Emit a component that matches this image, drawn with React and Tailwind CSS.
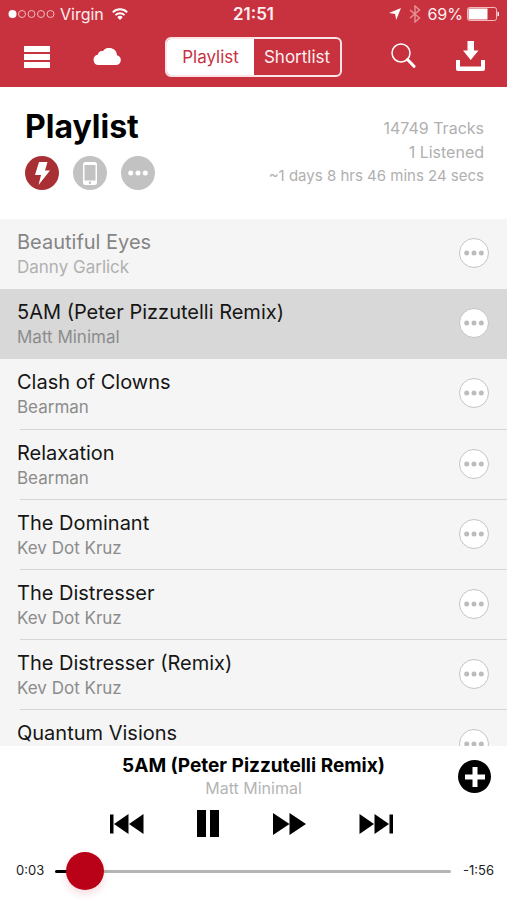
import { useState } from "react";

const tracks = [
  { title: "Beautiful Eyes", artist: "Danny Garlick", state: "played" },
  { title: "5AM (Peter Pizzutelli Remix)", artist: "Matt Minimal", state: "current" },
  { title: "Clash of Clowns", artist: "Bearman" },
  { title: "Relaxation", artist: "Bearman" },
  { title: "The Dominant", artist: "Kev Dot Kruz" },
  { title: "The Distresser", artist: "Kev Dot Kruz" },
  { title: "The Distresser (Remix)", artist: "Kev Dot Kruz" },
  { title: "Quantum Visions" },
];

function Signal() {
  return (
    <svg className="h-3 w-12" viewBox="0 0 48 12" aria-hidden="true">
      <circle cx="4.5" cy="6" r="4" fill="#fff" />
      {[14, 23.5, 33, 42.5].map((x) => (
        <circle key={x} cx={x} cy="6" r="3.5" fill="none" stroke="#f3b9bd" strokeWidth="1" />
      ))}
    </svg>
  );
}

function Wifi() {
  return (
    <svg className="h-3 w-4" viewBox="0 0 16 12" fill="none" stroke="#fff" strokeWidth="1.9" aria-hidden="true">
      <path d="M0.8 4.3a10.2 10.2 0 0 1 14.4 0" />
      <path d="M3.4 7.1a6.5 6.5 0 0 1 9.2 0" />
      <path d="M8 12 5.3 9.2a3.8 3.8 0 0 1 5.4 0z" fill="#fff" stroke="none" />
    </svg>
  );
}

function StatusBar() {
  return (
    <div className="grid h-7 grid-cols-3 items-center px-2 text-base leading-7">
      <div className="flex items-center">
        <Signal />
        <span className="mr-2 ml-1">Virgin</span>
        <Wifi />
      </div>
      <span className="text-center text-[17px] font-semibold">21:51</span>
      <div className="flex items-center justify-end">
        <svg className="mr-2 h-3 w-3" viewBox="0 0 12 12" aria-hidden="true">
          <path d="M12 0 7.2 12 6.1 6.1 0 5z" fill="#fff" />
        </svg>
        <svg className="mr-1.5 h-[18px] w-3" viewBox="0 0 12 18" fill="none" stroke="#e79298" strokeWidth="1.4" aria-hidden="true">
          <path d="M1 5l9.500 8L6 17V1l4.500 4L1 13" />
        </svg>
        <span className="mr-1">69%</span>
        <svg className="h-[14px] w-8" viewBox="0 0 32 14" aria-hidden="true">
          <rect x="0.5" y="0.5" width="29" height="13" rx="2" fill="none" stroke="#f3b9bd" />
          <rect x="1.500" y="1.500" width="19" height="11" fill="#fff" />
          <path d="M30.500 4.500a2.600 2.600 0 0 1 0 5z" fill="#fff" />
        </svg>
      </div>
    </div>
  );
}

function Nav({ tab, onTab }) {
  const tabClass = (name) =>
    tab === name ? "bg-white text-[#c8323f]" : "text-[#fdeff0]";
  return (
    <nav className="flex items-center pt-[9px] pr-[22px] pb-[10px] pl-6">
      <div className="flex items-center gap-[43px]">
        <button type="button" aria-label="Menu">
          <svg className="h-[22px] w-[26px]" viewBox="0 0 26 22" fill="#fff">
            <path d="M0 0h26v6H0zM0 8h26v6H0zM0 16h26v6H0z" />
          </svg>
        </button>
        <button type="button" aria-label="Cloud">
          <svg className="h-[18px] w-[29px]" viewBox="0 0 29 18" fill="#fff">
            <path d="M5.500 17a5.200 5.200 0 0 1-.7-10.300A4.600 4.600 0 0 1 10 3 7.800 7.800 0 0 1 24 7.200 5 5 0 0 1 23.500 17z" />
          </svg>
        </button>
        <div className="flex h-10 overflow-hidden rounded-md border-2 border-[#fbe4e6] text-[17px]">
          <button type="button" aria-pressed={tab === "playlist"} onClick={() => onTab("playlist")} className={`w-[87px] pt-0.5 ${tabClass("playlist")}`}>
            Playlist
          </button>
          <button type="button" aria-pressed={tab === "shortlist"} onClick={() => onTab("shortlist")} className={`w-[86px] pt-0.5 ${tabClass("shortlist")}`}>
            Shortlist
          </button>
        </div>
      </div>
      <div className="ml-auto flex items-center gap-10">
        <button type="button" aria-label="Search" className="pb-1">
          <svg className="h-[25px] w-[25px]" viewBox="0 0 25 25" fill="none" stroke="#fff">
            <circle cx="10" cy="10" r="9" strokeWidth="1.500" />
            <path d="M16.500 16.500 23 23.300" strokeWidth="3" strokeLinecap="round" />
          </svg>
        </button>
        <button type="button" aria-label="Download" className="pb-0.5">
          <svg className="h-[30px] w-[29px]" viewBox="0 0 29 30" fill="#fff">
            <path d="M11.500 0h6.500v9.500h4.500L14.700 19 7 9.500h4.500z" />
            <path d="M0 19h4V25.500h21V19h4V28a2 2 0 0 1-2 2H2a2 2 0 0 1-2-2z" />
          </svg>
        </button>
      </div>
    </nav>
  );
}

function Dots() {
  return (
    <svg className="h-[6px] w-5" viewBox="0 0 20 6" fill="currentColor" aria-hidden="true">
      <circle cx="2.700" cy="3" r="2.500" />
      <circle cx="10" cy="3" r="2.500" />
      <circle cx="17.300" cy="3" r="2.500" />
    </svg>
  );
}

function Summary() {
  const round = "flex h-[34px] w-[34px] items-center justify-center rounded-full text-white";
  return (
    <section className="flex justify-between bg-white pt-[22px] pr-[23px] pb-[29px] pl-[25px]">
      <div>
        <h1 className="text-[32px] leading-9 font-bold text-black">Playlist</h1>
        <div className="mt-[11px] flex gap-[14px]">
          <button type="button" aria-label="Quick play" className={`${round} bg-[#a83034]`}>
            <svg className="h-[23px] w-[15px]" viewBox="0 0 15 23" fill="currentColor">
              <path d="M4 0h8.500L10 8.500h5L3.500 23 6 13H0z" />
            </svg>
          </button>
          <button type="button" aria-label="On this device" className={`${round} bg-[#c2c2c2]`}>
            <svg className="h-[23px] w-[14px]" viewBox="0 0 14 23">
              <path fillRule="evenodd" fill="currentColor" d="M2.500 0h9A2.500 2.500 0 0 1 14 2.500v18a2.500 2.500 0 0 1-2.500 2.500h-9A2.500 2.500 0 0 1 0 20.500v-18A2.500 2.500 0 0 1 2.500 0zM1.500 3v15.500h11V3zM7 19.600a1.200 1.200 0 1 0 0 2.400 1.200 1.200 0 0 0 0-2.400z" />
            </svg>
          </button>
          <button type="button" aria-label="More options" className={`${round} bg-[#c2c2c2]`}>
            <Dots />
          </button>
        </div>
      </div>
      <div className="pt-[7px] text-right text-[#b0b0b0]">
        <p className="text-base leading-6">14749 Tracks</p>
        <p className="text-base leading-6">1 Listened</p>
        <p className="text-[15px] leading-6">~1 days 8 hrs 46 mins 24 secs</p>
      </div>
    </section>
  );
}

function Track({ title, artist, state, divided }) {
  const current = state === "current";
  const played = state === "played";
  return (
    <li className={current ? "bg-[#d8d8d8]" : "bg-[#f5f5f5]"}>
      <div className={`ml-5 flex h-[70px] justify-between pr-[18px] ${divided ? "border-t border-[#d6d6d6]" : ""}`}>
        <div className="-ml-[3px] pt-[11px]">
          <p className={`text-[20px] leading-6 ${played ? "text-[#858585]" : "text-[#161616]"}`}>{title}</p>
          {artist && (
            <p className={`mt-px text-[17px] leading-6 ${played ? "text-[#b0b0b0]" : "text-[#8c8c8c]"}`}>{artist}</p>
          )}
        </div>
        <button type="button" aria-label={`Options for ${title}`} className="mt-[19px] flex h-[30px] w-[30px] items-center justify-center rounded-full border border-[#c4c4c4] bg-white text-[#bcbcbc]">
          <Dots />
        </button>
      </div>
    </li>
  );
}

function Player() {
  return (
    <section className="bg-white pb-[10px]">
      <div className="flex pt-2">
        <div className="w-[65px]" />
        <div className="flex-1 text-center">
          <h2 className="text-[19px] leading-6 font-bold text-black">5AM (Peter Pizzutelli Remix)</h2>
          <p className="text-base leading-5 text-[#b4b4b4]">Matt Minimal</p>
        </div>
        <div className="w-[65px] pt-[6px] pl-4">
          <button type="button" aria-label="Add to playlist" className="flex h-[33px] w-[33px] items-center justify-center rounded-full bg-black">
            <svg className="h-5 w-5" viewBox="0 0 20 20" fill="#fff">
              <path d="M7.500 0h5v7.500H20v5h-7.500V20h-5v-7.500H0v-5h7.500z" />
            </svg>
          </button>
        </div>
      </div>
      <div className="mx-auto mt-3 flex w-[288px] items-center justify-between pr-1">
        <button type="button" aria-label="Previous track">
          <svg className="h-5 w-[34px]" viewBox="0 0 34 20">
            <path d="M0 0.500h3.500v19H0zM18.500 0v20L4 10zM33.500 0v20L19 10z" />
          </svg>
        </button>
        <button type="button" aria-label="Pause">
          <svg className="h-[27px] w-[22px]" viewBox="0 0 22 27">
            <path d="M0 0h9v27H0zM13 0h9v27h-9z" />
          </svg>
        </button>
        <button type="button" aria-label="Fast forward">
          <svg className="h-[22px] w-[33px]" viewBox="0 0 33 22">
            <path d="M0 0l16.500 11L0 22zM16.500 0 33 11 16.500 22z" />
          </svg>
        </button>
        <button type="button" aria-label="Next track">
          <svg className="h-5 w-[34px]" viewBox="0 0 34 20">
            <path d="M0.500 0 15 10 0.500 20zM15.500 0 30 10 15.500 20zM30.500 0.500H34v19h-3.500z" />
          </svg>
        </button>
      </div>
      <div className="mt-[15px] flex items-center pr-[13px] pl-4 text-[13px] text-[#222]">
        <label htmlFor="seek" className="w-[39px]">0:03</label>
        <input
          id="seek"
          type="range"
          min="0"
          max="119"
          step="any"
          defaultValue="3.6"
          className="h-[38px] min-w-0 flex-1 appearance-none bg-transparent [&::-webkit-slider-runnable-track]:h-[3px] [&::-webkit-slider-runnable-track]:rounded-full [&::-webkit-slider-runnable-track]:bg-[linear-gradient(to_right,#000_30px,#b4b4b4_30px)] [&::-webkit-slider-thumb]:-mt-[18px] [&::-webkit-slider-thumb]:h-[38px] [&::-webkit-slider-thumb]:w-[38px] [&::-webkit-slider-thumb]:appearance-none [&::-webkit-slider-thumb]:rounded-full [&::-webkit-slider-thumb]:bg-[#b90218] [&::-webkit-slider-thumb]:shadow-[0_4px_8px_rgba(185,2,24,0.15)]"
        />
        <span className="w-[43px] text-right">-1:56</span>
      </div>
    </section>
  );
}

export default function App() {
  const [tab, setTab] = useState("playlist");
  return (
    <div className="flex h-screen flex-col overflow-hidden bg-white font-['Inter','Liberation_Sans',sans-serif]">
      <header className="bg-[#c8323f] text-[#fdeff0]">
        <StatusBar />
        <Nav tab={tab} onTab={setTab} />
      </header>
      <Summary />
      <ul className="min-h-0 flex-1 overflow-y-auto bg-[#f5f5f5] [scrollbar-width:none]">
        {tracks.map((track, i) => (
          <Track key={track.title} {...track} divided={i > 2} />
        ))}
      </ul>
      <Player />
    </div>
  );
}
